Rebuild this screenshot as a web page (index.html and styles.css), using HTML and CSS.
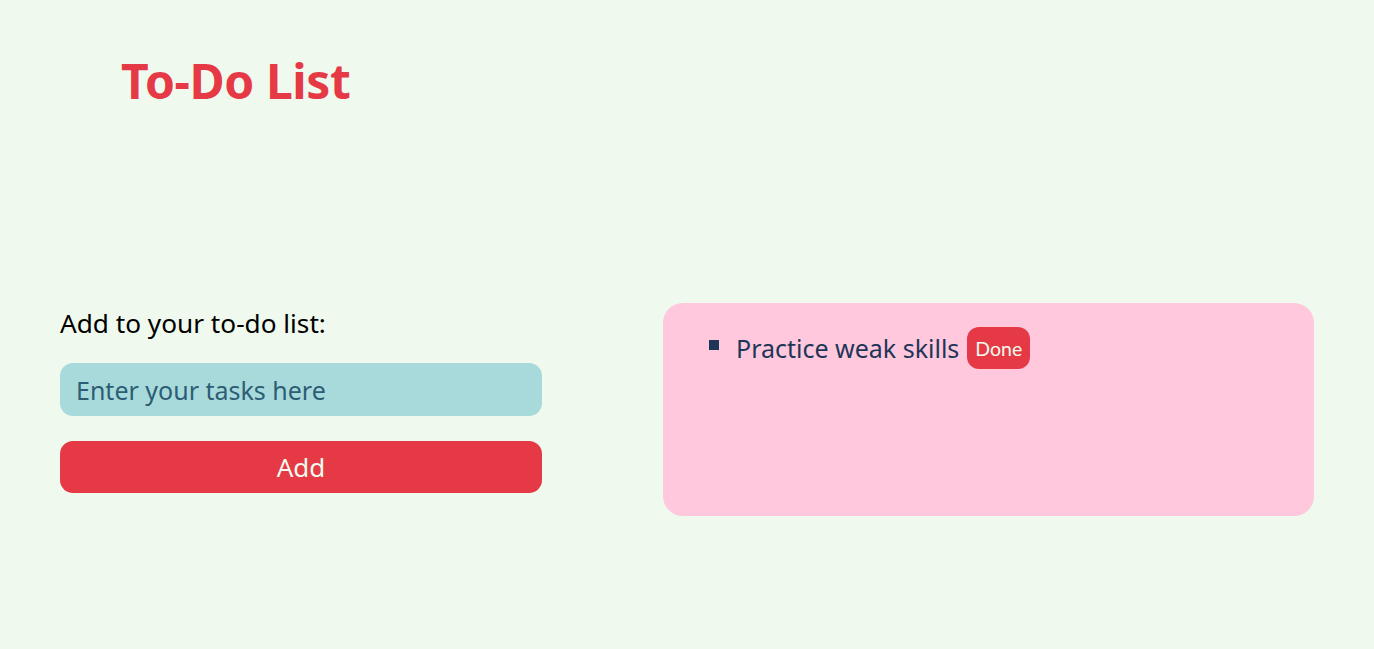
FILE: index.html
```html
<!DOCTYPE html>
<html>
<head>
<meta charset="utf-8">
<link rel="stylesheet" href="styles.css">
</head>
<body>
<header class="header">
  <h1 class="title">To-Do List</h1>
</header>
<main class="main">
  <section class="form">
    <label class="label" for="task">Add to your to-do list:</label>
    <input class="input" id="task" type="text" placeholder="Enter your tasks here">
    <button class="add-btn">Add</button>
  </section>
  <section class="panel">
    <ul class="list">
      <li class="item"><span class="item-text">Practice weak skills</span><button class="done-btn">Done</button></li>
    </ul>
  </section>
</main>
</body>
</html>
```
FILE: styles.css
```css
html, body {
  margin: 0;
  padding: 0;
}
body {
  background: #f0f9ee;
  font-family: "Noto Sans", "Open Sans", sans-serif;
  width: 1374px;
  height: 649px;
  overflow: hidden;
}
.header {
  padding: 51px 0 0 121px;
  height: 303px;
  box-sizing: border-box;
}
.title {
  margin: 0;
  color: #e63946;
  font-size: 48px;
  font-weight: 700;
  line-height: 60px;
  letter-spacing: -0.4px;
}
.main {
  display: flex;
  padding: 0 60px;
  gap: 121px;
  align-items: flex-start;
}
.form {
  width: 482px;
  display: flex;
  flex-direction: column;
}
.label {
  font-size: 26.2px;
  line-height: 40px;
  color: #000;
  height: 40px;
}
.input {
  margin-top: 20px;
  height: 53px;
  box-sizing: border-box;
  border: none;
  border-radius: 13px;
  background: #a8dadc;
  padding: 0 16px;
  font-family: inherit;
  font-size: 25px;
  color: #1d3557;
  outline: none;
}
.input::placeholder {
  color: #2c5d73;
  opacity: 1;
}
.add-btn {
  margin-top: 25px;
  height: 52px;
  border: none;
  border-radius: 13px;
  background: #e63946;
  color: #f1faee;
  font-family: inherit;
  font-size: 26px;
  padding: 0;
}
.panel {
  width: 651px;
  height: 213px;
  background: #ffc8dd;
  border-radius: 20px;
  box-sizing: border-box;
  padding-top: 20px;
}
.list {
  margin: 0;
  padding: 0 0 0 73px;
  list-style: square;
  color: #1d3557;
}
.item {
  font-size: 25px;
  line-height: 42px;
}
.item::marker {
  font-size: 28px;
}
.item-text {
  vertical-align: middle;
}
.done-btn {
  margin-left: 8px;
  height: 42px;
  border: none;
  border-radius: 12px;
  background: #e63946;
  color: #f1faee;
  font-family: "Lato", sans-serif;
  font-size: 19.5px;
  padding: 0 8px;
  vertical-align: middle;
}
```
